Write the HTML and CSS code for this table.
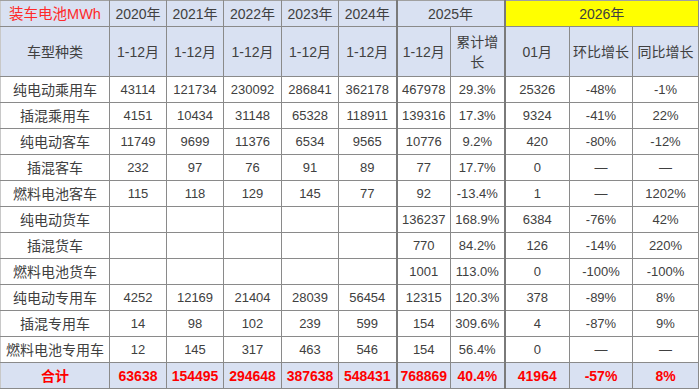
FILE: index.html
```html
<!DOCTYPE html>
<html lang="zh">
<head>
<meta charset="utf-8">
<link rel="stylesheet" href="styles.css">
</head>
<body>
<table class="sheet">
<colgroup>
<col class="c-type"><col class="c-y"><col class="c-y"><col class="c-y3"><col class="c-y"><col class="c-y3"><col class="c-25"><col class="c-25"><col class="c-m"><col class="c-hb"><col class="c-tb">
</colgroup>
<thead>
<tr class="h1">
<th class="title">装车电池MWh</th>
<th>2020年</th><th>2021年</th><th>2022年</th><th>2023年</th><th>2024年</th>
<th colspan="2" class="sep-l sep-r">2025年</th>
<th colspan="3" class="yellow">2026年</th>
</tr>
<tr class="h2">
<th>车型种类</th>
<th>1-12月</th><th>1-12月</th><th>1-12月</th><th>1-12月</th><th>1-12月</th>
<th class="sep-l">1-12月</th><th class="sep-r wrap">累计增长</th>
<th>01月</th><th>环比增长</th><th>同比增长</th>
</tr>
</thead>
<tbody>
<tr><td>纯电动乘用车</td><td>43114</td><td>121734</td><td>230092</td><td>286841</td><td>362178</td><td class="sep-l">467978</td><td class="sep-r">29.3%</td><td>25326</td><td>-48%</td><td>-1%</td></tr>
<tr><td>插混乘用车</td><td>4151</td><td>10434</td><td>31148</td><td>65328</td><td>118911</td><td class="sep-l">139316</td><td class="sep-r">17.3%</td><td>9324</td><td>-41%</td><td>22%</td></tr>
<tr><td>纯电动客车</td><td>11749</td><td>9699</td><td>11376</td><td>6534</td><td>9565</td><td class="sep-l">10776</td><td class="sep-r">9.2%</td><td>420</td><td>-80%</td><td>-12%</td></tr>
<tr><td>插混客车</td><td>232</td><td>97</td><td>76</td><td>91</td><td>89</td><td class="sep-l">77</td><td class="sep-r">17.7%</td><td>0</td><td>—</td><td>—</td></tr>
<tr><td>燃料电池客车</td><td>115</td><td>118</td><td>129</td><td>145</td><td>77</td><td class="sep-l">92</td><td class="sep-r">-13.4%</td><td>1</td><td>—</td><td>1202%</td></tr>
<tr><td>纯电动货车</td><td></td><td></td><td></td><td></td><td></td><td class="sep-l">136237</td><td class="sep-r">168.9%</td><td>6384</td><td>-76%</td><td>42%</td></tr>
<tr><td>插混货车</td><td></td><td></td><td></td><td></td><td></td><td class="sep-l">770</td><td class="sep-r">84.2%</td><td>126</td><td>-14%</td><td>220%</td></tr>
<tr><td>燃料电池货车</td><td></td><td></td><td></td><td></td><td></td><td class="sep-l">1001</td><td class="sep-r">113.0%</td><td>0</td><td>-100%</td><td>-100%</td></tr>
<tr><td>纯电动专用车</td><td>4252</td><td>12169</td><td>21404</td><td>28039</td><td>56454</td><td class="sep-l">12315</td><td class="sep-r">120.3%</td><td>378</td><td>-89%</td><td>8%</td></tr>
<tr><td>插混专用车</td><td>14</td><td>98</td><td>102</td><td>239</td><td>599</td><td class="sep-l">154</td><td class="sep-r">309.6%</td><td>4</td><td>-87%</td><td>9%</td></tr>
<tr><td>燃料电池专用车</td><td>12</td><td>145</td><td>317</td><td>463</td><td>546</td><td class="sep-l">154</td><td class="sep-r">56.4%</td><td>0</td><td>—</td><td>—</td></tr>
<tr class="total"><td>合计</td><td>63638</td><td>154495</td><td>294648</td><td>387638</td><td>548431</td><td class="sep-l">768869</td><td class="sep-r">40.4%</td><td>41964</td><td>-57%</td><td>8%</td></tr>
</tbody>
</table>
</body>
</html>
```
FILE: styles.css
```css
html, body {
  margin: 0;
  padding: 0;
  background: #ffffff;
}
body {
  font-family: "Liberation Sans", "Noto Sans CJK SC", sans-serif;
  color: #404040;
  width: 700px;
  height: 390px;
  overflow: hidden;
}
.sheet {
  border-collapse: collapse;
  table-layout: fixed;
  width: 699px;
  font-size: 13px;
}
.c-type { width: 109px; }
.c-y { width: 57px; }
.c-y3 { width: 58px; }
.c-25 { width: 54px; }
.c-m { width: 65px; }
.c-hb { width: 63px; }
.c-tb { width: 66px; }
.sheet th, .sheet td {
  border: 1px solid #8a8a8a;
  padding: 0;
  text-align: center;
  vertical-align: middle;
  white-space: nowrap;
  overflow: hidden;
  line-height: 16px;
}
.sheet th {
  font-weight: 400;
  font-size: 14px;
  background: #d9e1f2;
}
.sheet td:first-child { font-size: 14px; }
.sheet tr:first-child th { border-top: 1px solid #a0a0a0; }
.sheet th:first-child, .sheet td:first-child { border-left: 1px solid #c8c8c8; }
.h1 th { height: 25px; }
.h2 th { height: 49px; }
.sheet td { height: 25px; }
.title {
  color: #ff2a2a;
  font-size: 14.5px !important;
}
.yellow { background: #ffff00 !important; }
.wrap {
  white-space: normal !important;
  line-height: 20px !important;
  padding: 0 2px !important;
}
.sep-l { border-left: 2px solid #7a7a7a !important; }
.sep-r { border-right: 2px solid #7a7a7a !important; }
.total td {
  background: #d9e1f2;
  color: #ff0000;
  font-weight: 700;
  font-size: 14px;
  border-bottom: 1px solid #8a8a8a;
}
```
